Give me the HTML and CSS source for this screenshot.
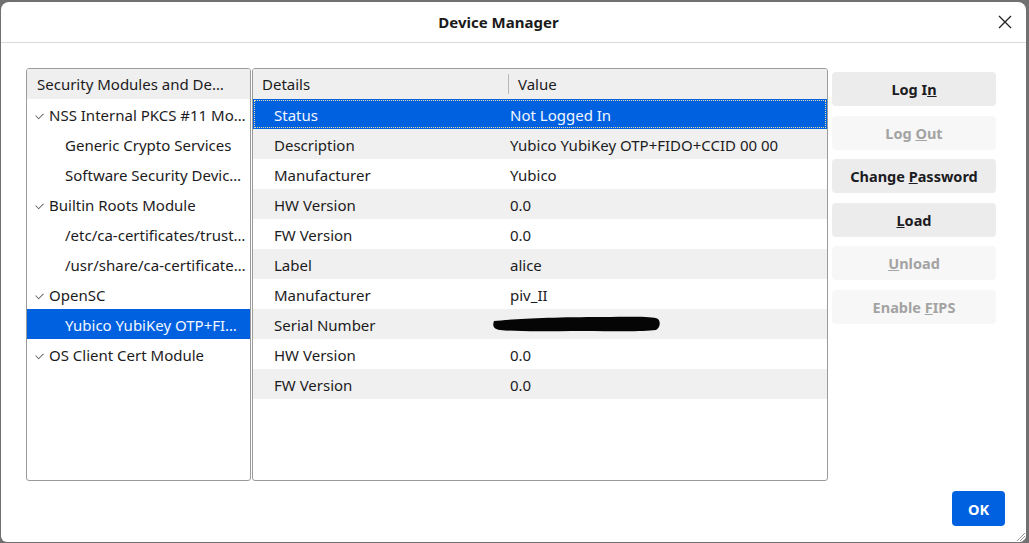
FILE: index.html
```html
<!DOCTYPE html>
<html lang="en">
<head>
    <meta charset="UTF-8">
    <title>Device Manager</title>
    <link rel="stylesheet" href="styles.css">
</head>
<body>

<div class="window">
    <div class="titlebar">
        <span></span>
        <h1>Device Manager</h1>
        <button class="close" title="Close">
            <svg width="14" height="14" viewBox="0 0 14 14"><path d="M1 1L13 13M13 1L1 13" stroke="#222" stroke-width="1.3" fill="none"/></svg>
        </button>
    </div>

    <div class="content">
        <div class="tree">
            <div class="tree-head">Security Modules and De…</div>
            <div class="tree-row parent"><span class="twisty"></span><span class="label">NSS Internal PKCS #11 Mo…</span></div>
            <div class="tree-row child"><span class="label">Generic Crypto Services</span></div>
            <div class="tree-row child"><span class="label">Software Security Devic…</span></div>
            <div class="tree-row parent"><span class="twisty"></span><span class="label">Builtin Roots Module</span></div>
            <div class="tree-row child"><span class="label">/etc/ca-certificates/trust…</span></div>
            <div class="tree-row child"><span class="label">/usr/share/ca-certificate…</span></div>
            <div class="tree-row parent"><span class="twisty"></span><span class="label">OpenSC</span></div>
            <div class="tree-row child selected"><span class="label">Yubico YubiKey OTP+FI…</span></div>
            <div class="tree-row parent"><span class="twisty"></span><span class="label">OS Client Cert Module</span></div>
        </div>

        <div class="details">
            <div class="details-head">
                <div class="col-name">Details</div>
                <div class="col-value">Value</div>
            </div>
            <div class="drow selected"><div class="name">Status</div><div class="value">Not Logged In</div></div>
            <div class="drow"><div class="name">Description</div><div class="value">Yubico YubiKey OTP+FIDO+CCID 00 00</div></div>
            <div class="drow"><div class="name">Manufacturer</div><div class="value">Yubico</div></div>
            <div class="drow"><div class="name">HW Version</div><div class="value">0.0</div></div>
            <div class="drow"><div class="name">FW Version</div><div class="value">0.0</div></div>
            <div class="drow"><div class="name">Label</div><div class="value">alice</div></div>
            <div class="drow"><div class="name">Manufacturer</div><div class="value">piv_II</div></div>
            <div class="drow"><div class="name">Serial Number</div><div class="value">
                <svg class="redacted" width="170" height="18" viewBox="0 0 170 18">
                    <path d="M2 6C20 4 60 2 110 2C140 2 160 1 166 4C169 7 168 13 164 15C150 17 120 16 90 16C60 16 30 17 8 15C2 14 0 11 2 6Z" fill="#050505"/>
                </svg>
            </div></div>
            <div class="drow"><div class="name">HW Version</div><div class="value">0.0</div></div>
            <div class="drow"><div class="name">FW Version</div><div class="value">0.0</div></div>
        </div>

        <div class="actions">
            <button class="btn">Log I<u>n</u></button>
            <button class="btn" disabled>Log <u>O</u>ut</button>
            <button class="btn">Change <u>P</u>assword</button>
            <button class="btn"><u>L</u>oad</button>
            <button class="btn" disabled><u>U</u>nload</button>
            <button class="btn" disabled>Enable <u>F</u>IPS</button>
        </div>
    </div>

    <div class="footer">
        <button class="btn-primary">OK</button>
    </div>

    <svg class="grip" width="12" height="12" viewBox="0 0 12 12">
        <path d="M11 3L3 11M11 6L6 11M11 9L9 11" stroke="#999" stroke-width="1" fill="none"/>
    </svg>
</div>

</body>
</html>
```

FILE: styles.css
```css
html, body {
    margin: 0;
    height: 100%;
}
body {
    background: #707070;
    font-family: "Noto Sans", "DejaVu Sans", sans-serif;
    font-size: 15px;
    color: #1c1b22;
    padding: 2px 3px 1px 1px;
    box-sizing: border-box;
}
.window {
    position: relative;
    height: 540px;
    background: #fff;
    border-radius: 8px 8px 6px 6px;
    display: flex;
    flex-direction: column;
    overflow: hidden;
}

/* title bar */
.titlebar {
    height: 40px;
    border-bottom: 1px solid #dadada;
    display: grid;
    grid-template-columns: 1fr auto 1fr;
    align-items: center;
}
.titlebar h1 {
    margin: 0 30px 0 0;
    font-size: 15px;
    font-weight: bold;
    color: #1a1a1a;
}
.close {
    justify-self: end;
    margin-right: 14px;
    border: none;
    background: none;
    padding: 0;
    width: 14px;
    height: 14px;
    display: flex;
}

/* main area */
.content {
    display: flex;
    padding: 25px 0 0 25px;
    height: 413px;
}
.tree, .details {
    border: 1px solid #9b9b9b;
    border-radius: 3px;
    overflow: hidden;
}
.tree {
    width: 223px;
    margin-right: 1px;
}
.tree-head, .details-head {
    height: 30px;
    background: #efefef;
    display: flex;
    align-items: center;
}
.tree-head {
    padding: 0 10px;
    white-space: nowrap;
    overflow: hidden;
}
.tree-row {
    height: 30px;
    display: flex;
    align-items: center;
    white-space: nowrap;
    padding-top: 1px;
    box-sizing: border-box;
}
.tree-row .label {
    overflow: hidden;
}
.tree-row.parent {
    padding-left: 8px;
}
.tree-row.child {
    padding-left: 38px;
}
.twisty {
    width: 8px;
    height: 5px;
    margin-right: 5px;
    margin-top: 1px;
    border-left: 1.2px solid #555;
    border-bottom: 1.2px solid #555;
    transform: rotate(-45deg) scale(0.8);
    flex: none;
}
.tree-row.selected {
    background: #0061e0;
    color: #f2f6ff;
}

/* details table */
.details {
    width: 574px;
}
.details-head .col-name {
    width: 246px;
    padding-left: 9px;
    border-right: 1px solid #b8b8b8;
    line-height: 20px;
}
.details-head .col-value {
    padding-left: 9px;
}
.drow {
    height: 30px;
    display: flex;
    align-items: center;
    padding-top: 1px;
    box-sizing: border-box;
}
.drow:nth-of-type(odd) {
    background: #f0f0f0;
}
.drow .name {
    width: 236px;
    padding-left: 21px;
}
.drow .value {
    display: flex;
    align-items: center;
}
.drow.selected {
    background: #0061e0;
    color: #f2f6ff;
    outline: 1px dotted #e8e0a0;
    outline-offset: -2px;
}
.redacted {
    margin-left: -18px;
    margin-top: -1px;
}

/* buttons */
.actions {
    width: 164px;
    margin-left: 4px;
    padding-top: 4px;
    display: flex;
    flex-direction: column;
    gap: 9.6px;
}
.btn {
    height: 34px;
    border: none;
    border-radius: 4px;
    background: #ececec;
    font-family: inherit;
    font-size: 14.5px;
    font-weight: bold;
    color: #1c1b22;
    padding: 0;
}
.btn:disabled {
    background: #f7f7f7;
    color: #a3a3a3;
}

.footer {
    display: flex;
    justify-content: flex-end;
    padding: 10px 21px 0 0;
}
.btn-primary {
    width: 53px;
    height: 35px;
    border: none;
    border-radius: 4px;
    background: #0061e0;
    color: #fff;
    font-family: inherit;
    font-size: 14.5px;
    font-weight: bold;
}
.grip {
    position: absolute;
    right: 0;
    bottom: 0;
}
```
